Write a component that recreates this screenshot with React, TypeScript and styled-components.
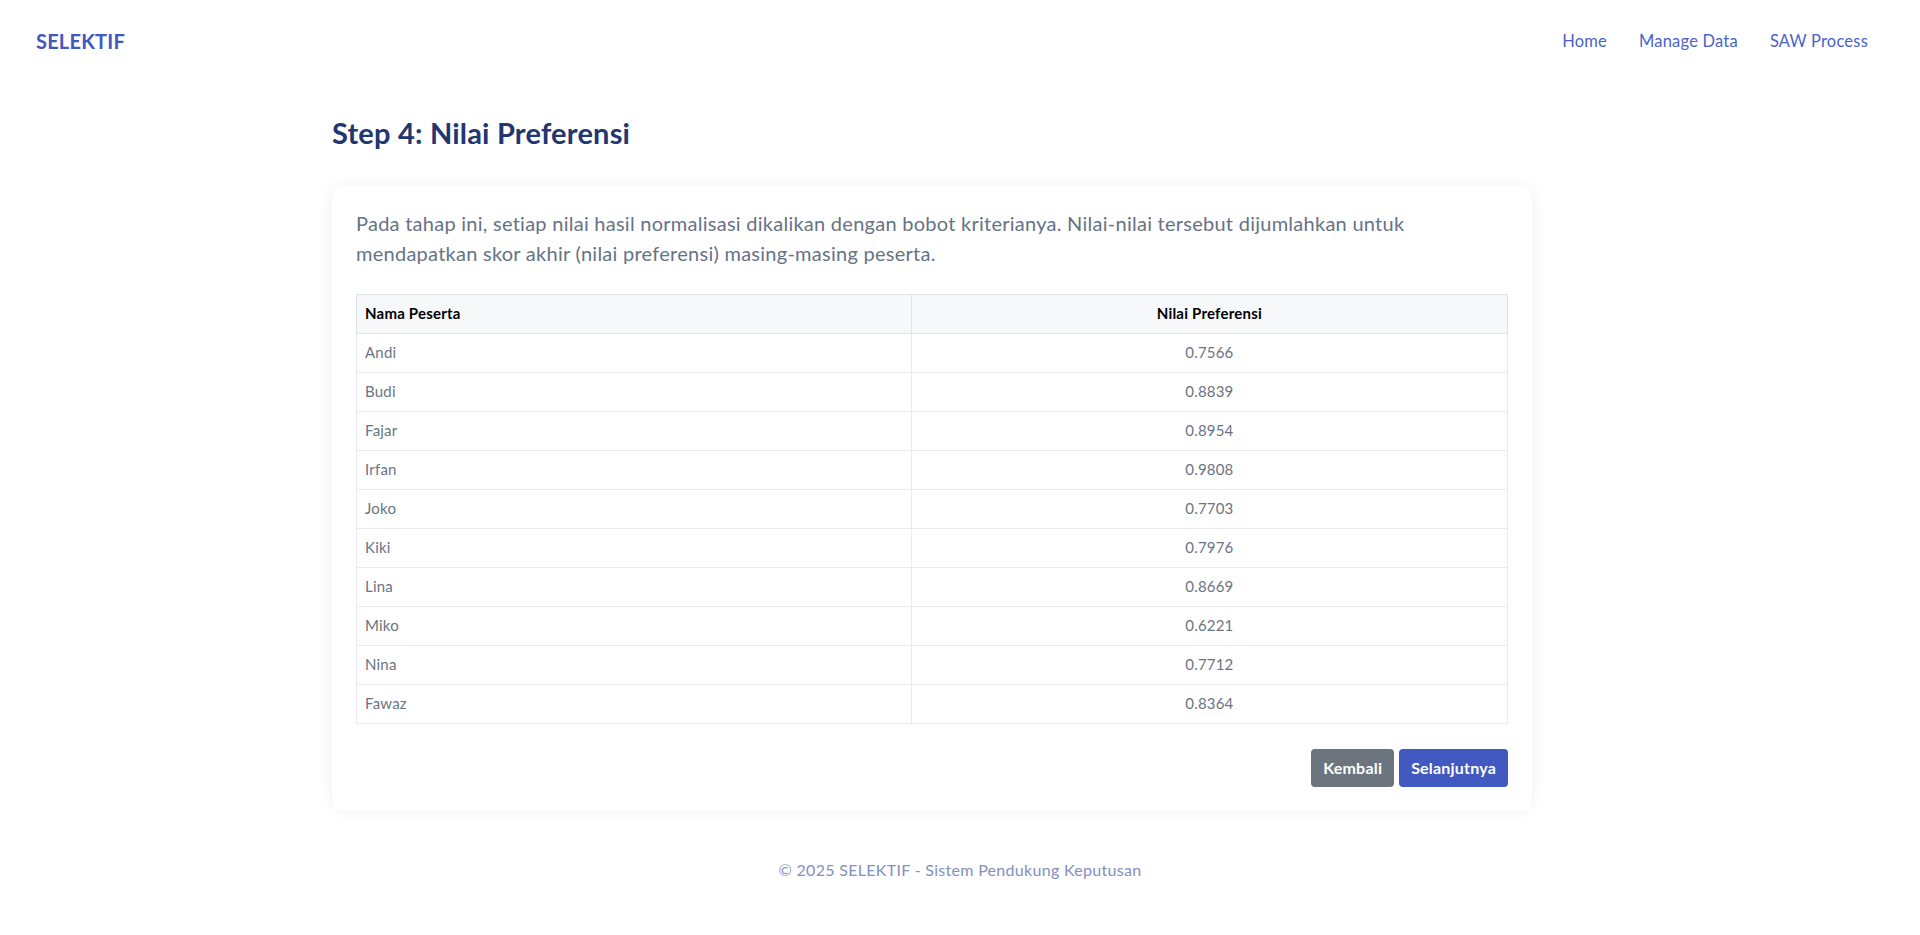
import React from "react";
import styled, { createGlobalStyle } from "styled-components";

const GlobalStyle = createGlobalStyle`
  * {
    box-sizing: border-box;
  }
  body {
    margin: 0;
    background: #ffffff;
    font-family: Lato, "Noto Sans", "Liberation Sans", sans-serif;
    letter-spacing: 0.013em;
    color: #212529;
  }
`;

const Navbar = styled.nav`
  display: flex;
  align-items: center;
  justify-content: space-between;
  height: 82px;
  padding: 0 36px;
`;

const Brand = styled.a`
  font-size: 20px;
  font-weight: 700;
  color: #4158c0;
  text-decoration: none;
  letter-spacing: 0.2px;
`;

const NavList = styled.div`
  display: flex;
  align-items: center;
`;

const NavLink = styled.a`
  padding: 8px 16px;
  font-size: 16.5px;
  color: #4a63c9;
  text-decoration: none;
`;

const Main = styled.main`
  width: 1200px;
  margin-left: calc(50% - 628px);
  padding-top: 34px;
`;

const Title = styled.h2`
  margin: 0 0 35px;
  font-size: 29px;
  line-height: 1.2;
  font-weight: 700;
  color: #22366f;
  letter-spacing: 0.2px;
`;

const Card = styled.section`
  background: #ffffff;
  border-radius: 12px;
  box-shadow: 0 0 18px rgba(0, 0, 0, 0.06);
  padding: 22px 24px 24px;
`;

const Lead = styled.p`
  margin: 0 0 26px;
  font-size: 20px;
  line-height: 1.5;
  font-weight: 400;
  color: #667385;
  letter-spacing: 0.26px;
`;

const Table = styled.table`
  width: 100%;
  border-collapse: collapse;
  font-size: 15px;
  line-height: 23px;
`;

const Th = styled.th<{ $center?: boolean }>`
  padding: 7.5px 8px;
  text-align: ${(p) => (p.$center ? "center" : "left")};
  font-weight: 700;
  color: #000000;
  background: #f7f8fa;
  border: 1px solid #e0e3e7;
`;

const Td = styled.td<{ $center?: boolean }>`
  padding: 7.5px 8px;
  text-align: ${(p) => (p.$center ? "center" : "left")};
  color: #6b7482;
  border: 1px solid #e8eaed;
`;

const Actions = styled.div`
  display: flex;
  justify-content: flex-end;
  gap: 5px;
  margin-top: 25px;
`;

const Button = styled.button<{ $variant: "secondary" | "primary" }>`
  height: 38px;
  padding: 0 12px;
  border: none;
  border-radius: 4px;
  font-family: inherit;
  font-size: 16px;
  font-weight: 700;
  letter-spacing: 0.2px;
  color: #ffffff;
  background: ${(p) => (p.$variant === "primary" ? "#4259c1" : "#6c757d")};
  cursor: pointer;
`;

const Footer = styled.footer`
  padding: 49px 0 40px;
  text-align: center;
  font-size: 16px;
  color: #8490be;
  letter-spacing: 0.3px;
`;

const rows: [string, string][] = [
  ["Andi", "0.7566"],
  ["Budi", "0.8839"],
  ["Fajar", "0.8954"],
  ["Irfan", "0.9808"],
  ["Joko", "0.7703"],
  ["Kiki", "0.7976"],
  ["Lina", "0.8669"],
  ["Miko", "0.6221"],
  ["Nina", "0.7712"],
  ["Fawaz", "0.8364"],
];

const App = () => {
  return (
    <>
      <GlobalStyle />
      <Navbar>
        <Brand href="#">SELEKTIF</Brand>
        <NavList>
          <NavLink href="#">Home</NavLink>
          <NavLink href="#">Manage Data</NavLink>
          <NavLink href="#">SAW Process</NavLink>
        </NavList>
      </Navbar>
      <Main>
        <Title>Step 4: Nilai Preferensi</Title>
        <Card>
          <Lead>
            Pada tahap ini, setiap nilai hasil normalisasi dikalikan dengan bobot kriterianya.
            Nilai-nilai tersebut dijumlahkan untuk mendapatkan skor akhir (nilai preferensi)
            masing-masing peserta.
          </Lead>
          <Table>
            <thead>
              <tr>
                <Th style={{ width: "48.2%" }}>Nama Peserta</Th>
                <Th $center>Nilai Preferensi</Th>
              </tr>
            </thead>
            <tbody>
              {rows.map(([name, value]) => (
                <tr key={name}>
                  <Td>{name}</Td>
                  <Td $center>{value}</Td>
                </tr>
              ))}
            </tbody>
          </Table>
          <Actions>
            <Button $variant="secondary">Kembali</Button>
            <Button $variant="primary">Selanjutnya</Button>
          </Actions>
        </Card>
      </Main>
      <Footer>© 2025 SELEKTIF - Sistem Pendukung Keputusan</Footer>
    </>
  );
};

export default App;
